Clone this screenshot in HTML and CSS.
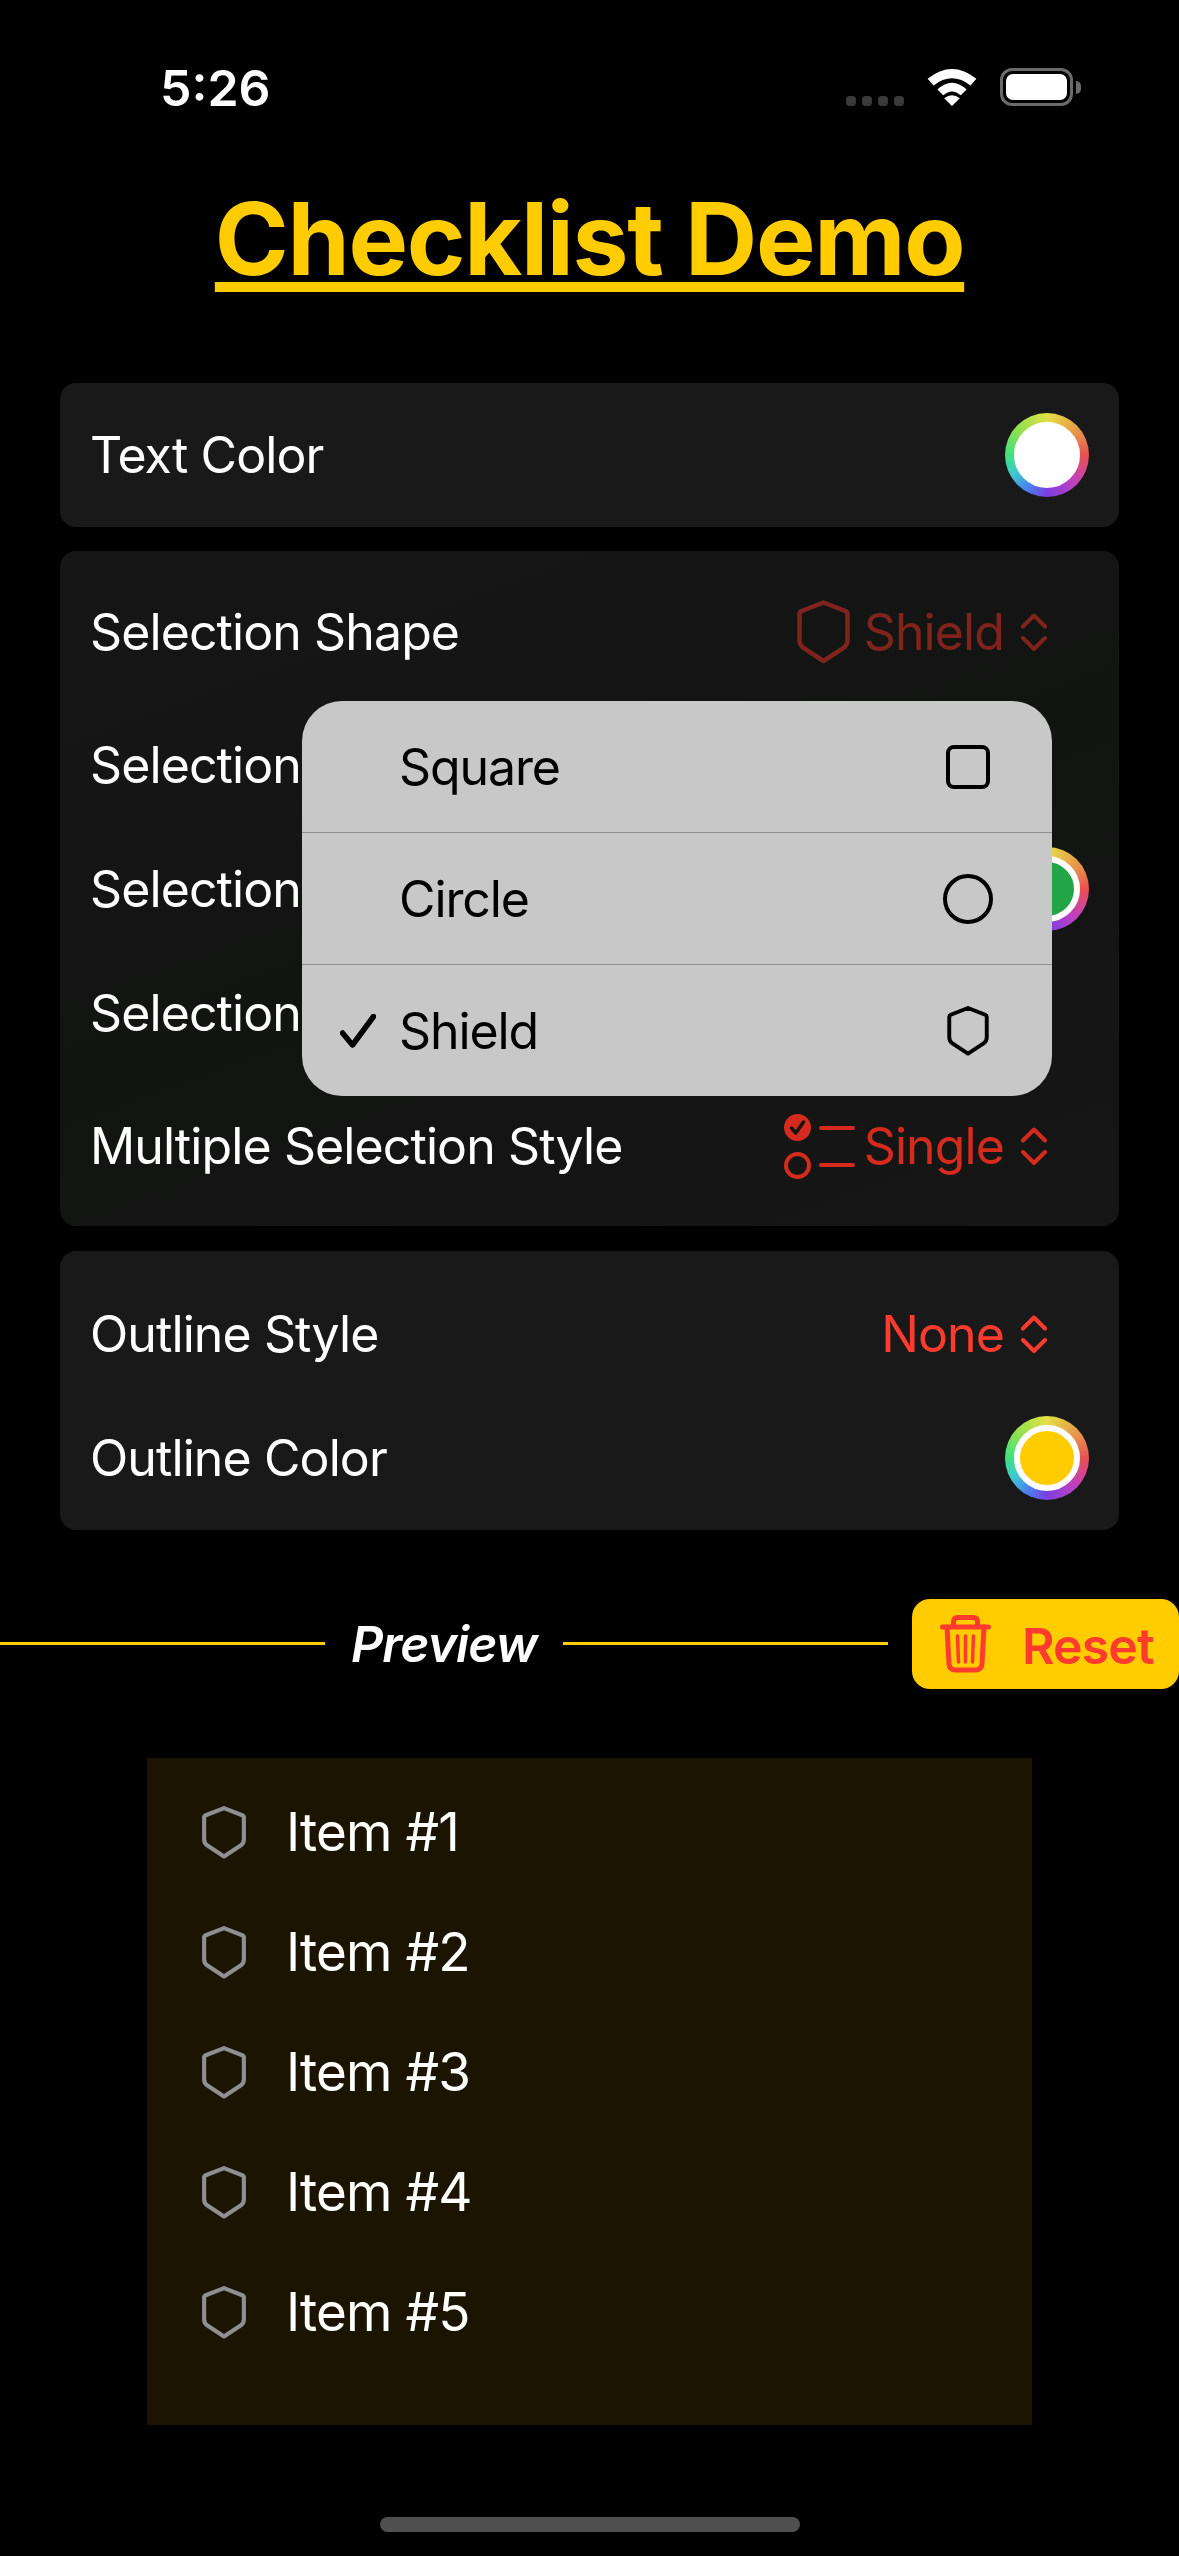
FILE: index.html
```html
<!DOCTYPE html>
<html lang="en">
<head>
    <meta charset="UTF-8">
    <meta name="viewport" content="width=device-width, initial-scale=1.0">
    <title>Checklist Demo</title>
    <link rel="stylesheet" href="styles.css">
</head>
<body>
    <svg class="defs" width="0" height="0">
        <symbol id="shield" viewBox="0 0 53 64">
            <path d="M26.5 2.5 L48.5 11.2 Q50.5 12 50.5 14 V40 Q50.5 45 46.5 47.8 L26.5 61 L6.5 47.8 Q2.5 45 2.5 40 V14 Q2.5 12 4.5 11.2 Z"/>
        </symbol>
        <symbol id="updown" viewBox="0 0 26 38">
            <path d="M2 13.5 L13 2.5 L24 13.5 M2 25 L13 36 L24 25"/>
        </symbol>
    </svg>

    <div class="screen">
        <div class="status">
            <span class="time">5:26</span>
            <div class="status-icons">
                <div class="dots"><i></i><i></i><i></i><i></i></div>
                <svg class="wifi" width="50" height="37" viewBox="0 0 50 38">
                    <path d="M0 10 Q25 -10 50 10 L44 17 Q25 2 6 17 Z M10 21 Q25 7 40 21 L34 27 Q25 19 16 27 Z M17 30 Q25 24 33 30 L25 38 Z"/>
                </svg>
                <div class="battery"><div class="battery-fill"></div></div>
                <div class="battery-cap"></div>
            </div>
        </div>

        <h1 class="title">Checklist Demo</h1>

        <div class="card">
            <div class="row row-single">
                <span>Text Color</span>
                <div class="well"><div class="well-in fill-white"></div></div>
            </div>
        </div>

        <div class="card card-dim card-mid">
            <div class="row row-picker">
                <span>Selection Shape</span>
                <div class="pick pick-faded">
                    <svg class="ic-shield"><use href="#shield"/></svg>
                    <span>Shield</span>
                    <svg class="ic-updown"><use href="#updown"/></svg>
                </div>
            </div>
            <div class="row"><span>Selection</span></div>
            <div class="row">
                <span>Selection</span>
                <div class="well"><div class="well-in fill-green"></div></div>
            </div>
            <div class="row"><span>Selection</span></div>
            <div class="row row-picker">
                <span>Multiple Selection Style</span>
                <div class="pick pick-dim">
                    <svg class="ic-multi" width="71" height="65" viewBox="0 0 71 65">
                        <circle class="solid" cx="13.5" cy="13.5" r="13.5"/>
                        <path class="tick" d="M7.5 14 L11.8 19 L19.5 8"/>
                        <circle cx="13.5" cy="51.5" r="11.5"/>
                        <path d="M37 14 H69 M37 51 H69"/>
                    </svg>
                    <span>Single</span>
                    <svg class="ic-updown"><use href="#updown"/></svg>
                </div>
            </div>

            <div class="menu">
                <div class="menu-item">
                    <span>Square</span>
                    <svg class="menu-ic" width="50" height="50" viewBox="0 0 50 50"><rect x="5" y="5" width="40" height="40" rx="6"/></svg>
                </div>
                <div class="menu-item">
                    <span>Circle</span>
                    <svg class="menu-ic" width="50" height="50" viewBox="0 0 50 50"><circle cx="25" cy="25" r="23"/></svg>
                </div>
                <div class="menu-item">
                    <svg class="menu-check" width="36" height="34" viewBox="0 0 36 34"><path d="M2.5 19 L12.5 31 L33.5 2.5"/></svg>
                    <span>Shield</span>
                    <svg class="menu-ic menu-shield"><use href="#shield"/></svg>
                </div>
            </div>
        </div>

        <div class="card card-last">
            <div class="row">
                <span>Outline Style</span>
                <div class="pick">
                    <span>None</span>
                    <svg class="ic-updown"><use href="#updown"/></svg>
                </div>
            </div>
            <div class="row">
                <span>Outline Color</span>
                <div class="well"><div class="well-in fill-yellow"></div></div>
            </div>
        </div>

        <div class="preview-head">
            <div class="rule rule-left"></div>
            <span class="preview-label">Preview</span>
            <div class="rule rule-right"></div>
            <div class="reset">
                <svg width="51" height="58" viewBox="0 0 51 58">
                    <path d="M2.5 12 H48.5 M13.5 12 V7 Q13.5 2.5 18 2.5 H33 Q37.5 2.5 37.5 7 V12"/>
                    <path d="M7 12 L9 49 Q9.5 55 15.5 55 H35.5 Q41.5 55 42 49 L44 12"/>
                    <path class="thin" d="M17.5 21 L18.5 47 M25.5 21 V47 M33.5 21 L32.5 47"/>
                </svg>
                <span>Reset</span>
            </div>
        </div>

        <div class="preview">
            <div class="item"><svg class="ic-item"><use href="#shield"/></svg><span>Item #1</span></div>
            <div class="item"><svg class="ic-item"><use href="#shield"/></svg><span>Item #2</span></div>
            <div class="item"><svg class="ic-item"><use href="#shield"/></svg><span>Item #3</span></div>
            <div class="item"><svg class="ic-item"><use href="#shield"/></svg><span>Item #4</span></div>
            <div class="item"><svg class="ic-item"><use href="#shield"/></svg><span>Item #5</span></div>
        </div>

        <div class="home-bar"></div>
    </div>
</body>
</html>
```
FILE: styles.css
```css
* {
    box-sizing: border-box;
}
body {
    margin: 0;
    background: #000;
    color: #fff;
    font-family: Inter, "Noto Sans", sans-serif;
    font-size: 50px;
    letter-spacing: -0.9px;
}
.defs {
    position: absolute;
}
.screen {
    width: 1179px;
    height: 2556px;
    overflow: hidden;
    display: flex;
    flex-direction: column;
}
svg {
    display: block;
    fill: none;
    stroke: currentColor;
    stroke-linecap: round;
    stroke-linejoin: round;
}

/* status bar */
.status {
    height: 180px;
    padding: 60px 98px 0 160px;
    display: flex;
    justify-content: space-between;
    align-items: flex-start;
}
.time {
    font-size: 50px;
    font-weight: 600;
    line-height: 56px;
    letter-spacing: 0;
}
.status-icons {
    display: flex;
    align-items: center;
    padding-top: 8px;
}
.dots {
    display: flex;
    gap: 6px;
    margin: 28px 23px 0 0;
}
.dots i {
    width: 10px;
    height: 10px;
    border-radius: 4px;
    background: #3a3a3a;
}
.wifi {
    fill: #fff;
    stroke: none;
    margin-right: 23px;
}
.battery {
    width: 73px;
    height: 38px;
    border: 3px solid #6a6a6a;
    border-radius: 12px;
    padding: 3px;
}
.battery-fill {
    height: 100%;
    background: #fff;
    border-radius: 7px;
}
.battery-cap {
    width: 5px;
    height: 13px;
    margin-left: 3px;
    background: #6a6a6a;
    border-radius: 0 6px 6px 0;
}

.title {
    margin: 0 auto;
    height: 203px;
    font-size: 100px;
    font-weight: 700;
    line-height: 118px;
    letter-spacing: -1.3px;
    color: #ffcc00;
    text-decoration: underline;
    text-decoration-thickness: 10px;
    text-underline-offset: 7px;
}

/* form cards */
.card {
    position: relative;
    margin: 0 60px 24px;
    background: #191919;
    border-radius: 16px;
}
.card-dim {
    background: linear-gradient(160deg, #161616, #121412 50%, #151615);
}
.card-mid {
    padding: 10px 0 9px;
    margin-bottom: 25px;
}
.card-last {
    padding: 21px 0 10px;
    margin-bottom: 69px;
}
.row {
    height: 124px;
    padding: 0 30px;
    display: flex;
    justify-content: space-between;
    align-items: center;
}
.row-single {
    height: 144px;
}
.row-picker {
    height: 142px;
}
.pick {
    display: flex;
    align-items: center;
    margin-right: 42px;
    color: #ff3b30;
}
.pick-dim {
    color: #d62a1f;
}
.pick-faded {
    color: #7f231c;
}
.ic-shield {
    width: 53px;
    height: 64px;
    stroke-width: 4.5;
    margin-right: 14px;
}
.ic-multi {
    stroke-width: 4;
    margin-right: 9px;
}
.ic-multi .solid {
    fill: currentColor;
    stroke: none;
}
.ic-multi .tick {
    stroke: #131513;
    stroke-width: 3.5;
}
.ic-updown {
    width: 26px;
    height: 38px;
    stroke-width: 4;
    margin-left: 17px;
}
.well {
    width: 84px;
    height: 84px;
    border-radius: 50%;
    background: conic-gradient(#e2e044, #e88a4c 60deg, #e85050 90deg, #c040c0 135deg, #7a3fe0 180deg, #4a80f0 210deg, #40c8d0 240deg, #40e080 270deg, #90e050 310deg, #e2e044);
    display: flex;
    align-items: center;
    justify-content: center;
}
.well-in {
    width: 66px;
    height: 66px;
    border-radius: 50%;
    border: 6px solid #fff;
}
.fill-white {
    background: #fff;
}
.fill-green {
    background: #22a447;
}
.fill-yellow {
    background: #ffcc00;
}

/* popup menu over the middle card */
.menu {
    position: absolute;
    left: 242px;
    top: 150px;
    width: 750px;
    height: 395px;
    background: #c8c8c8;
    border-radius: 40px;
    color: #000;
    letter-spacing: -1.1px;
    display: flex;
    flex-direction: column;
}
.menu-item {
    position: relative;
    flex: 1;
    padding: 0 59px 0 97px;
    display: flex;
    justify-content: space-between;
    align-items: center;
    border-bottom: 1px solid #8f8f8f;
}
.menu-item:last-child {
    border-bottom: none;
}
.menu-ic {
    stroke-width: 4;
}
.menu-shield {
    width: 50px;
    height: 50px;
    stroke-width: 5;
}
.menu-check {
    position: absolute;
    left: 38px;
    top: 49px;
    stroke-width: 5.5;
}

/* preview */
.preview-head {
    display: flex;
    align-items: center;
    height: 90px;
    margin-bottom: 69px;
}
.rule {
    height: 3px;
    background: #ffcc00;
    margin-top: -2px;
}
.rule-left {
    width: 325px;
}
.rule-right {
    width: 325px;
}
.preview-label {
    width: 238px;
    text-align: center;
    font-weight: 600;
    font-style: italic;
}
.reset {
    margin-left: 24px;
    width: 267px;
    height: 90px;
    padding-left: 28px;
    background: #ffcc00;
    border-radius: 18px;
    color: #ff3b30;
    font-weight: 600;
    display: flex;
    align-items: center;
    gap: 31px;
}
.reset span {
    margin-top: 4px;
}
.reset svg {
    stroke-width: 5;
}
.reset .thin {
    stroke-width: 3.5;
}
.preview {
    width: 885px;
    height: 667px;
    margin-left: 147px;
    padding-top: 14px;
    background: #1a1400;
}
.item {
    height: 120px;
    padding-left: 55px;
    font-size: 53px;
    display: flex;
    align-items: center;
    gap: 40px;
}
.ic-item {
    width: 44px;
    height: 53px;
    stroke-width: 5;
    color: #8e8e93;
}
.home-bar {
    width: 420px;
    height: 15px;
    margin: 92px auto 0;
    border-radius: 8px;
    background: #4f4f4f;
}
```
